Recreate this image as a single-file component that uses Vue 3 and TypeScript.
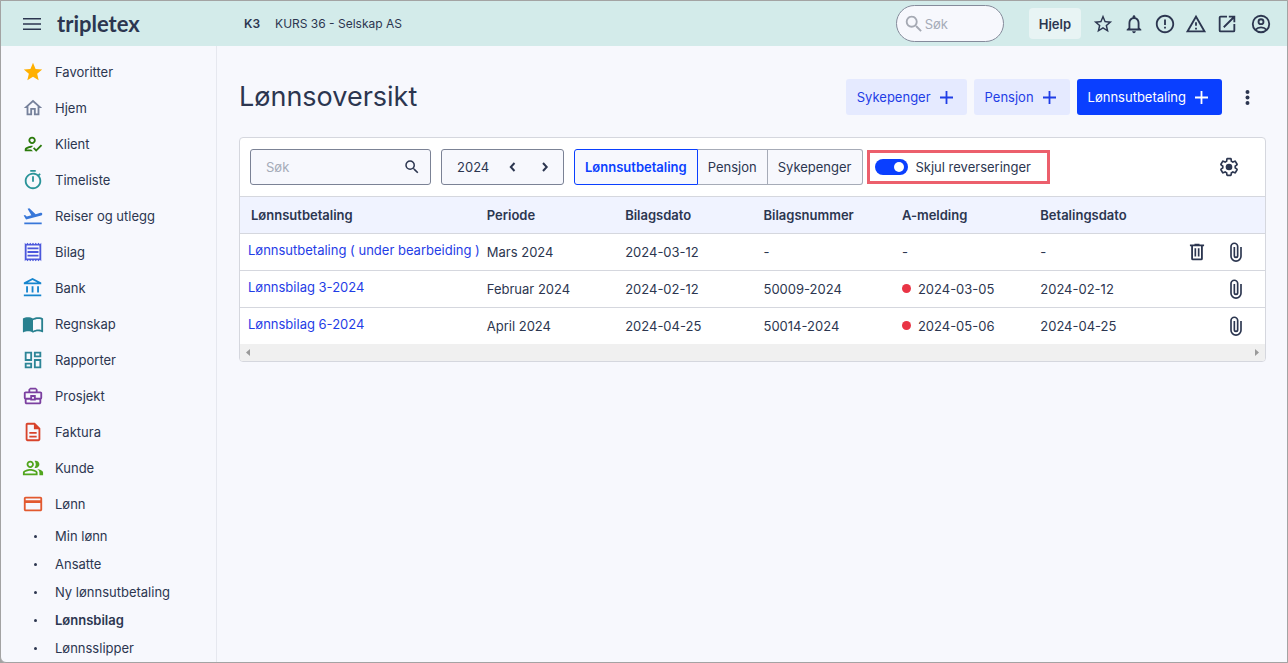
<script setup lang="ts">
import { ref } from 'vue'

interface NavItem {
  label: string
  color: string
  path: string
}

interface PayrollRow {
  title: string
  period: string
  date: string
  number: string
  report: string
  flagged: boolean
  payment: string
  deletable: boolean
}

const navItems: NavItem[] = [
  { label: 'Favoritter', color: '#ffb000', path: 'M12 17.27 18.18 21l-1.64-7.03L22 9.24l-7.19-.61L12 2 9.19 8.63 2 9.24l5.46 4.73L5.82 21z' },
  { label: 'Hjem', color: '#76819b', path: 'm12 5.69 5 4.5V18h-2v-6H9v6H7v-7.81l5-4.5M12 3 2 12h3v8h6v-6h2v6h6v-8h3z' },
  { label: 'Klient', color: '#2b7a0b', path: 'M11 12c2.21 0 4-1.79 4-4s-1.79-4-4-4-4 1.790-4 4 1.790 4 4 4zm0-6c1.100 0 2 .9 2 2s-.9 2-2 2-2-.9-2-2 .9-2 2-2zM5 18c.2-.63 2.570-1.680 4.960-1.940l2.040-2c-.39-.04-.68-.06-1-.06-2.670 0-8 1.340-8 4v2h9l-2-2H5zM20.600 12.500l-5.130 5.170-2.070-2.080L12 17l3.470 3.500L22 13.910z' },
  { label: 'Timeliste', color: '#2a9499', path: 'M15 1H9v2h6V1zm-4 13h2V8h-2v6zm8.030-6.610 1.420-1.420c-.43-.51-.9-.99-1.410-1.410l-1.420 1.420C16.070 4.740 14.120 4 12 4c-4.970 0-9 4.030-9 9s4.020 9 9 9 9-4.030 9-9c0-2.120-.74-4.070-1.970-5.610zM12 20c-3.870 0-7-3.130-7-7s3.130-7 7-7 7 3.130 7 7-3.130 7-7 7z' },
  { label: 'Reiser og utlegg', color: '#3877d9', path: 'M2.500 19h19v2h-19v-2zm19.570-9.360c-.21-.8-1.040-1.280-1.840-1.060L14.920 10l-6.900-6.430-1.930.51 4.140 7.170-4.970 1.330-1.970-1.540-1.450.39 2.590 4.490L21 11.490c.81-.23 1.280-1.050 1.070-1.850z' },
  { label: 'Bilag', color: '#4b57dc', path: 'M19.500 3.500 18 2l-1.500 1.500L15 2l-1.500 1.500L12 2l-1.500 1.500L9 2 7.500 3.500 6 2 4.500 3.500 3 2v20l1.500-1.500L6 22l1.500-1.500L9 22l1.500-1.500L12 22l1.500-1.500L15 22l1.500-1.500L18 22l1.500-1.500L21 22V2l-1.500 1.500zM19 19.090H5V4.910h14v14.180zM6 15h12v2H6v-2zm0-4h12v2H6v-2zm0-4h12v2H6V7z' },
  { label: 'Bank', color: '#1685ce', path: 'M6.500 10h-2v7h2v-7zm6 0h-2v7h2v-7zm8.500 9H2v2h19v-2zm-2.500-9h-2v7h2v-7zm-7-6.740L16.710 6H6.290l5.210-2.740m0-2.260L2 6v2h19V6l-9.500-5z' },
  { label: 'Regnskap', color: '#28808f', path: 'M21 5c-1.110-.35-2.330-.5-3.500-.5-1.950 0-4.050.4-5.500 1.500-1.450-1.100-3.550-1.500-5.500-1.500S2.450 4.900 1 6v14.650c0 .25.25.5.5.5.1 0 .15-.05.25-.05C3.100 20.450 5.050 20 6.500 20c1.950 0 4.050.4 5.500 1.500 1.350-.85 3.800-1.500 5.500-1.500 1.650 0 3.350.3 4.750 1.050.1.05.15.05.25.05.25 0 .5-.25.5-.5V6c-.6-.45-1.250-.75-2-1zm0 13.500c-1.100-.35-2.300-.5-3.500-.5-1.700 0-4.150.65-5.500 1.500V8c1.350-.85 3.800-1.500 5.500-1.500 1.200 0 2.400.15 3.500.5v11.500z' },
  { label: 'Rapporter', color: '#2d8597', path: 'M19 5v2h-4V5h4M9 5v6H5V5h4m10 8v6h-4v-6h4M9 17v2H5v-2h4M21 3h-8v6h8V3zM11 3H3v10h8V3zm10 8h-8v10h8V11zm-10 4H3v6h8v-6z' },
  { label: 'Prosjekt', color: '#7b3fa0', path: 'M20 7h-3V5l-2-2H9L7 5v2H4c-1.100 0-2 .9-2 2v5c0 .75.4 1.380 1 1.730V19c0 1.110.89 2 2 2h14c1.110 0 2-.89 2-2v-3.280c.59-.35 1-.99 1-1.720V9c0-1.100-.9-2-2-2zM9 5h6v2H9V5zM4 9h16v5h-5v-3H9v3H4V9zm9 6h-2v-2h2v2zm6 4H5v-3h4v1h6v-1h4v3z' },
  { label: 'Faktura', color: '#d8432b', path: 'M8 16h8v2H8zm0-4h8v2H8zm6-10H6c-1.100 0-2 .9-2 2v16c0 1.100.89 2 1.990 2H18c1.100 0 2-.9 2-2V8l-6-6zm4 18H6V4h7v5h5v11z' },
  { label: 'Kunde', color: '#51a51d', path: 'M16.670 13.130C18.040 14.060 19 15.320 19 17v3h4v-3c0-2.180-3.570-3.470-6.330-3.870zM9 12c2.210 0 4-1.790 4-4s-1.790-4-4-4-4 1.790-4 4 1.790 4 4 4zm0-6c1.100 0 2 .9 2 2s-.9 2-2 2-2-.9-2-2 .9-2 2-2zm6 6c2.210 0 4-1.790 4-4s-1.790-4-4-4c-.47 0-.91.1-1.330.24C14.500 5.270 15 6.580 15 8s-.5 2.730-1.330 3.760c.42.14.86.24 1.330.24zm-6 1c-2.670 0-8 1.340-8 4v3h16v-3c0-2.660-5.330-4-8-4zm6 5H3v-.99C3.200 16.290 6.300 15 9 15s5.800 1.290 6 2v1z' },
  { label: 'Lønn', color: '#e2592f', path: 'M20 4H4c-1.110 0-1.990.89-1.990 2L2 18c0 1.110.89 2 2 2h16c1.110 0 2-.89 2-2V6c0-1.110-.89-2-2-2zm0 14H4v-7h16v7zm0-10H4V6h16v2z' },
]

const subItems: string[] = ['Min lønn', 'Ansatte', 'Ny lønnsutbetaling', 'Lønnsbilag', 'Lønnsslipper']
const activeSub = 'Lønnsbilag'

const topActions: { label: string; path: string }[] = [
  { label: 'Favoritt', path: 'm22 9.240-7.190-.62L12 2 9.190 8.630 2 9.240l5.460 4.730L5.820 21 12 17.270 18.180 21l-1.630-7.030L22 9.240zM12 15.400l-3.760 2.270 1-4.280-3.320-2.880 4.380-.38L12 6.100l1.710 4.040 4.380.38-3.320 2.880 1 4.280L12 15.400z' },
  { label: 'Varsler', path: 'M12 22c1.100 0 2-.9 2-2h-4c0 1.100.9 2 2 2zm6-6v-5c0-3.070-1.630-5.640-4.500-6.320V4c0-.83-.67-1.500-1.500-1.500s-1.500.67-1.500 1.500v.68C7.640 5.360 6 7.920 6 11v5l-2 2v1h16v-1l-2-2zm-2 1H8v-6c0-2.480 1.510-4.500 4-4.500s4 2.020 4 4.500v6z' },
  { label: 'Meldinger', path: 'M11 15h2v2h-2v-2zm0-8h2v6h-2V7zm.99-5C6.470 2 2 6.480 2 12s4.470 10 9.990 10C17.520 22 22 17.520 22 12S17.520 2 11.990 2zM12 20c-4.420 0-8-3.580-8-8s3.580-8 8-8 8 3.580 8 8-3.580 8-8 8z' },
  { label: 'Advarsler', path: 'M12 5.990 19.530 19H4.470L12 5.990M12 2 1 21h22L12 2zm1 14h-2v2h2v-2zm0-6h-2v4h2v-4z' },
  { label: 'Åpne i nytt vindu', path: 'M19 3H5a2 2 0 0 0-2 2v14a2 2 0 0 0 2 2h14a2 2 0 0 0 2-2v-7h-2v7H5V5h7V3h7zM14 3v2h3.590l-9.830 9.830 1.410 1.410L19 6.410V10h2V3h-7z' },
]

const rows: PayrollRow[] = [
  { title: 'Lønnsutbetaling ( under bearbeiding )', period: 'Mars 2024', date: '2024-03-12', number: '-', report: '-', flagged: false, payment: '-', deletable: true },
  { title: 'Lønnsbilag 3-2024', period: 'Februar 2024', date: '2024-02-12', number: '50009-2024', report: '2024-03-05', flagged: true, payment: '2024-02-12', deletable: false },
  { title: 'Lønnsbilag 6-2024', period: 'April 2024', date: '2024-04-25', number: '50014-2024', report: '2024-05-06', flagged: true, payment: '2024-04-25', deletable: false },
]

const columns: string[] = ['Lønnsutbetaling', 'Periode', 'Bilagsdato', 'Bilagsnummer', 'A-melding', 'Betalingsdato']
const tabs: string[] = ['Lønnsutbetaling', 'Pensjon', 'Sykepenger']

const activeTab = ref('Lønnsutbetaling')
const year = ref(2024)
const hideReversed = ref(true)
const globalQuery = ref('')
const query = ref('')
</script>

<template>
  <div class="page">
    <header class="topbar">
      <button class="icon-btn menu" type="button" aria-label="Meny">
        <svg viewBox="0 0 18 14"><path d="M0 1h18v1.600H0zM0 6.200h18v1.600H0zM0 11.400h18V13H0z" /></svg>
      </button>
      <a class="logo" href="#">tripletex</a>
      <span class="company"><b>K3</b><span>KURS 36 - Selskap AS</span></span>
      <label class="global-search">
        <svg viewBox="0 0 24 24"><path d="M15.500 14h-.79l-.28-.27A6.470 6.470 0 0 0 16 9.500 6.500 6.500 0 1 0 9.500 16c1.610 0 3.090-.59 4.230-1.570l.27.28v.79l5 4.990L20.490 19l-4.990-5zm-6 0C7.010 14 5 11.990 5 9.500S7.010 5 9.500 5 14 7.010 14 9.500 11.990 14 9.500 14z" /></svg>
        <input v-model="globalQuery" type="text" placeholder="Søk" aria-label="Søk i Tripletex" />
      </label>
      <button class="help" type="button">Hjelp</button>
      <nav class="top-actions" aria-label="Snarveier">
        <button v-for="action in topActions" :key="action.label" class="icon-btn" type="button" :aria-label="action.label">
          <svg viewBox="0 0 24 24"><path :d="action.path" /></svg>
        </button>
      </nav>
      <button class="icon-btn" type="button" aria-label="Brukerkonto">
        <svg viewBox="0 0 24 24" class="account">
          <circle cx="12" cy="12" r="9" />
          <circle cx="12" cy="9.500" r="2.700" />
          <path d="M5.800 18.300c1.700-1.800 3.800-2.700 6.200-2.700s4.500.9 6.200 2.700" />
        </svg>
      </button>
    </header>

    <div class="body">
      <nav class="sidebar" aria-label="Hovedmeny">
        <a v-for="item in navItems" :key="item.label" class="nav-item" href="#">
          <svg viewBox="0 0 24 24" :style="{ fill: item.color }"><path :d="item.path" /></svg>
          <span>{{ item.label }}</span>
        </a>
        <ul class="submenu">
          <li v-for="sub in subItems" :key="sub">
            <a href="#" :class="{ active: sub === activeSub }">{{ sub }}</a>
          </li>
        </ul>
      </nav>

      <main class="content">
        <div class="heading">
          <h1>Lønnsoversikt</h1>
          <div class="actions">
            <button class="btn" type="button">Sykepenger<svg viewBox="0 0 13 13"><path d="M5.600 0h1.800v5.600H13v1.800H7.400V13H5.600V7.400H0V5.600h5.600z" /></svg></button>
            <button class="btn" type="button">Pensjon<svg viewBox="0 0 13 13"><path d="M5.600 0h1.800v5.600H13v1.800H7.400V13H5.600V7.400H0V5.600h5.600z" /></svg></button>
            <button class="btn primary" type="button">Lønnsutbetaling<svg viewBox="0 0 13 13"><path d="M5.600 0h1.800v5.600H13v1.800H7.400V13H5.600V7.400H0V5.600h5.600z" /></svg></button>
            <button class="icon-btn more" type="button" aria-label="Flere valg">
              <svg viewBox="0 0 24 24"><circle cx="12" cy="5" r="2.500" /><circle cx="12" cy="12" r="2.500" /><circle cx="12" cy="19" r="2.500" /></svg>
            </button>
          </div>
        </div>

        <section class="panel">
          <div class="toolbar">
            <label class="search">
              <input v-model="query" type="text" placeholder="Søk" aria-label="Søk i lønnsbilag" />
              <svg viewBox="0 0 24 24"><path d="M15.500 14h-.79l-.28-.27A6.470 6.470 0 0 0 16 9.500 6.500 6.500 0 1 0 9.500 16c1.610 0 3.090-.59 4.230-1.570l.27.28v.79l5 4.990L20.490 19l-4.990-5zm-6 0C7.010 14 5 11.990 5 9.500S7.010 5 9.500 5 14 7.010 14 9.500 11.990 14 9.500 14z" /></svg>
            </label>
            <div class="year">
              <span>{{ year }}</span>
              <button type="button" aria-label="Forrige år" @click="year--"><svg viewBox="0 0 10 10"><path d="M6.500 1 2.800 5l3.700 4" /></svg></button>
              <button type="button" aria-label="Neste år" @click="year++"><svg viewBox="0 0 10 10"><path d="M3 1l3.700 4L3 9" /></svg></button>
            </div>
            <div class="tabs">
              <button v-for="tab in tabs" :key="tab" type="button" :class="{ active: tab === activeTab }" @click="activeTab = tab">{{ tab }}</button>
            </div>
            <label class="toggle">
              <input v-model="hideReversed" type="checkbox" role="switch" />
              <span>Skjul reverseringer</span>
            </label>
            <button class="icon-btn settings" type="button" aria-label="Innstillinger">
              <svg viewBox="0 0 24 24">
                <path d="M19.430 12.980c.04-.32.07-.64.07-.98s-.03-.66-.07-.98l2.110-1.650c.19-.15.24-.42.12-.64l-2-3.460c-.12-.22-.39-.3-.61-.22l-2.490 1c-.52-.4-1.080-.73-1.690-.98l-.38-2.650A.49.49 0 0 0 14 2h-4c-.25 0-.46.18-.49.42l-.38 2.650c-.61.25-1.170.59-1.690.98l-2.490-1c-.23-.09-.49 0-.61.22l-2 3.460c-.13.22-.07.49.12.64l2.110 1.650c-.04.32-.07.65-.07.98s.03.66.07.98l-2.110 1.650c-.19.15-.24.42-.12.64l2 3.460c.12.22.39.3.61.22l2.490-1c.52.4 1.080.73 1.690.98l.38 2.650c.03.24.24.42.49.42h4c.25 0 .46-.18.49-.42l.38-2.650c.61-.25 1.170-.59 1.690-.98l2.490 1c.23.09.49 0 .61-.22l2-3.460c.12-.22.07-.49-.12-.64l-2.110-1.650z" class="gear" />
                <circle cx="12" cy="12" r="4" />
              </svg>
            </button>
          </div>

          <table>
            <colgroup>
              <col class="col-title" />
              <col v-for="n in 5" :key="n" class="col-data" />
              <col />
            </colgroup>
            <thead>
              <tr>
                <th v-for="column in columns" :key="column" scope="col">{{ column }}</th>
                <td></td>
              </tr>
            </thead>
            <tbody>
              <tr v-for="row in rows" :key="row.title">
                <td class="title"><a href="#">{{ row.title }}</a></td>
                <td>{{ row.period }}</td>
                <td>{{ row.date }}</td>
                <td>{{ row.number }}</td>
                <td><span class="report"><i v-if="row.flagged" class="dot"></i>{{ row.report }}</span></td>
                <td>{{ row.payment }}</td>
                <td>
                  <div class="row-actions">
                    <button v-if="row.deletable" class="icon-btn" type="button" aria-label="Slett">
                      <svg viewBox="0 0 24 24"><path d="M9 2v1H3.500v2.200H5V20a2 2 0 0 0 2 2h10a2 2 0 0 0 2-2V5.200h1.500V3H15V2H9zM7.200 5.200h9.600v14.600H7.200V5.200zm1.800 2.300v10h2v-10H9zm4 0v10h2v-10h-2z" /></svg>
                    </button>
                    <button class="icon-btn" type="button" aria-label="Vedlegg">
                      <svg viewBox="0 0 24 24" class="clip"><path d="M18 6v11a6 6 0 0 1-12 0V5.500a4 4 0 0 1 8 0V16.500a2 2 0 0 1-4 0V6" /></svg>
                    </button>
                  </div>
                </td>
              </tr>
            </tbody>
          </table>
          <div class="scrollbar">
            <button type="button" aria-label="Rull til venstre"><svg viewBox="0 0 4 7"><path d="M4 0v7L0 3.500z" /></svg></button>
            <button type="button" aria-label="Rull til høyre"><svg viewBox="0 0 4 7"><path d="M0 0v7l4-3.500z" /></svg></button>
          </div>
        </section>
      </main>
    </div>
  </div>
</template>

<style>
body {
  margin: 0;
  background: #a3a3a3;
}
</style>

<style scoped>
* {
  box-sizing: border-box;
}
.page {
  display: flex;
  flex-direction: column;
  min-height: 100vh;
  border: 1px solid #a3a3a3;
  border-radius: 0 0 0 6px;
  background: #f7f8fd;
  color: #2c3650;
  font: 13px/20px Inter, "Noto Sans", sans-serif;
}
button,
input {
  margin: 0;
  padding: 0;
  border: 0;
  background: none;
  color: inherit;
  font: inherit;
}
input {
  min-width: 0;
  outline: none;
}
input::placeholder {
  color: #a5abb8;
  opacity: 1;
}
a {
  color: inherit;
  text-decoration: none;
}
svg {
  display: block;
  flex: none;
  width: 22px;
  height: 22px;
  fill: #2c3650;
}
.topbar {
  display: flex;
  align-items: center;
  height: 45px;
  padding: 0 15px 0 22px;
  background: #d3ebea;
}
.menu svg {
  width: 18px;
  height: 14px;
}
.logo {
  width: 187px;
  margin-left: 16px;
  font: 700 22px/26px Lato, sans-serif;
}
.company {
  display: flex;
  flex: 1;
  gap: 15px;
  font-size: 12px;
}
.company b {
  font-weight: 600;
}
.global-search {
  display: flex;
  align-items: center;
  width: 108px;
  height: 37px;
  margin-right: 25px;
  padding: 0 10px 0 6px;
  border: 1px solid #858b9b;
  border-radius: 19px;
  background: #f7f8fd;
}
.global-search svg {
  fill: #a5a9b3;
}
.global-search input {
  width: 100%;
}
.help {
  height: 31px;
  padding: 0 10px;
  border-radius: 4px;
  background: #e8f4f4;
  font-weight: 600;
}
.top-actions {
  display: flex;
  gap: 9px;
  margin: 0 12px 0 11px;
}
.account,
.gear,
.clip {
  fill: none;
  stroke: #2c3650;
  stroke-width: 2px;
}
.body {
  display: flex;
  flex: 1;
}
.sidebar {
  flex: none;
  width: 216px;
  padding-top: 8px;
  border-right: 1px solid #e6e8ef;
}
.nav-item {
  display: flex;
  align-items: center;
  gap: 11px;
  height: 36px;
  padding-left: 21px;
}
.submenu {
  margin: 0;
  padding: 0;
  list-style: none;
}
.submenu a {
  display: flex;
  align-items: center;
  height: 28px;
  padding-left: 33px;
}
.submenu a::before {
  width: 3px;
  height: 3px;
  margin-right: 18px;
  border-radius: 50%;
  background: #2c3650;
  content: "";
}
.submenu .active {
  font-weight: 600;
}
.content {
  flex: 1;
  min-width: 0;
  padding: 33px 21px 0 22px;
}
.heading {
  display: flex;
  align-items: center;
  justify-content: space-between;
  margin-bottom: 22px;
}
h1 {
  margin: 0;
  font-size: 27px;
  font-weight: 400;
  line-height: 36px;
}
.actions {
  display: flex;
  align-items: center;
  gap: 7px;
}
.btn {
  display: flex;
  align-items: center;
  gap: 9px;
  height: 36px;
  padding: 0 14px 0 11px;
  border-radius: 3px;
  background: #e5eaff;
  color: #1f3de6;
}
.btn svg {
  width: 13px;
  height: 13px;
  fill: currentColor;
}
.primary {
  background: #0a3fff;
  color: #fff;
}
.more {
  padding: 0 9px;
}
.more svg {
  width: 19px;
  height: 19px;
}
.panel {
  overflow: hidden;
  border: 1px solid #d5d7de;
  border-radius: 4px;
  background: #fff;
}
.toolbar {
  display: flex;
  align-items: center;
  gap: 10px;
  padding: 11px 26px 11px 10px;
  border-bottom: 1px solid #d5d7de;
}
.search,
.year {
  display: flex;
  align-items: center;
  height: 36px;
  border: 1px solid #7b8295;
  border-radius: 3px;
  background: #f7f8fd;
}
.search {
  width: 181px;
  padding: 0 9px 0 15px;
}
.search input {
  flex: 1;
}
.search svg {
  width: 18px;
  height: 18px;
}
.year {
  width: 123px;
  padding: 0 7px 0 15px;
}
.year span {
  flex: 1;
}
.year button {
  padding: 6px;
}
.year button + button {
  margin-left: 10px;
}
.year svg {
  width: 10px;
  height: 10px;
  fill: none;
  stroke: #2c3650;
  stroke-width: 2px;
}
.tabs {
  display: flex;
}
.tabs button {
  height: 36px;
  padding: 0 10px;
  border: 1px solid #a6abb7;
  border-left-width: 0;
  background: #f7f8fd;
}
.tabs button:first-child {
  border-left-width: 1px;
  border-radius: 3px 0 0 3px;
}
.tabs button:last-child {
  border-radius: 0 3px 3px 0;
}
.tabs .active {
  border-color: #0a3fff;
  color: #0a3fff;
  font-weight: 600;
}
.toggle {
  display: flex;
  align-items: center;
  gap: 8px;
  width: 183px;
  height: 34px;
  margin-left: -6px;
  padding-left: 5px;
  border: 3px solid #ec5f6c;
}
.toggle input {
  display: flex;
  justify-content: flex-end;
  align-items: center;
  width: 33px;
  height: 16px;
  padding: 0 4px;
  border-radius: 8px;
  background: #0a3fff;
  appearance: none;
}
.toggle input:not(:checked) {
  justify-content: flex-start;
  background: #8a90a0;
}
.toggle input::before {
  width: 10px;
  height: 10px;
  border-radius: 50%;
  background: #fff;
  content: "";
}
.settings {
  margin-left: auto;
}
.settings svg {
  width: 20px;
  height: 20px;
}
table {
  width: 100%;
  border-collapse: collapse;
  table-layout: fixed;
}
.col-title {
  width: 23%;
}
.col-data {
  width: 13.500%;
}
th,
td {
  height: 37px;
  padding: 0 0 0 11px;
  text-align: left;
  white-space: nowrap;
}
thead {
  background: #f0f3ff;
}
thead th,
thead td {
  height: 36px;
}
th {
  font-weight: 600;
}
tbody tr {
  border-top: 1px solid #d5d7de;
}
.title {
  padding: 0 0 3px 8px;
  color: #1f3de6;
}
.report {
  display: flex;
  align-items: center;
  gap: 7px;
}
.dot {
  width: 9px;
  height: 9px;
  border-radius: 50%;
  background: #e93445;
}
.row-actions {
  display: flex;
  justify-content: flex-end;
  gap: 19px;
  padding-right: 19px;
}
.row-actions svg {
  width: 20px;
  height: 20px;
}
.scrollbar {
  display: flex;
  justify-content: space-between;
  padding: 5px 6px;
  background: #f0f0f0;
}
.scrollbar svg {
  width: 4px;
  height: 7px;
  fill: #9a9a9a;
}
</style>
